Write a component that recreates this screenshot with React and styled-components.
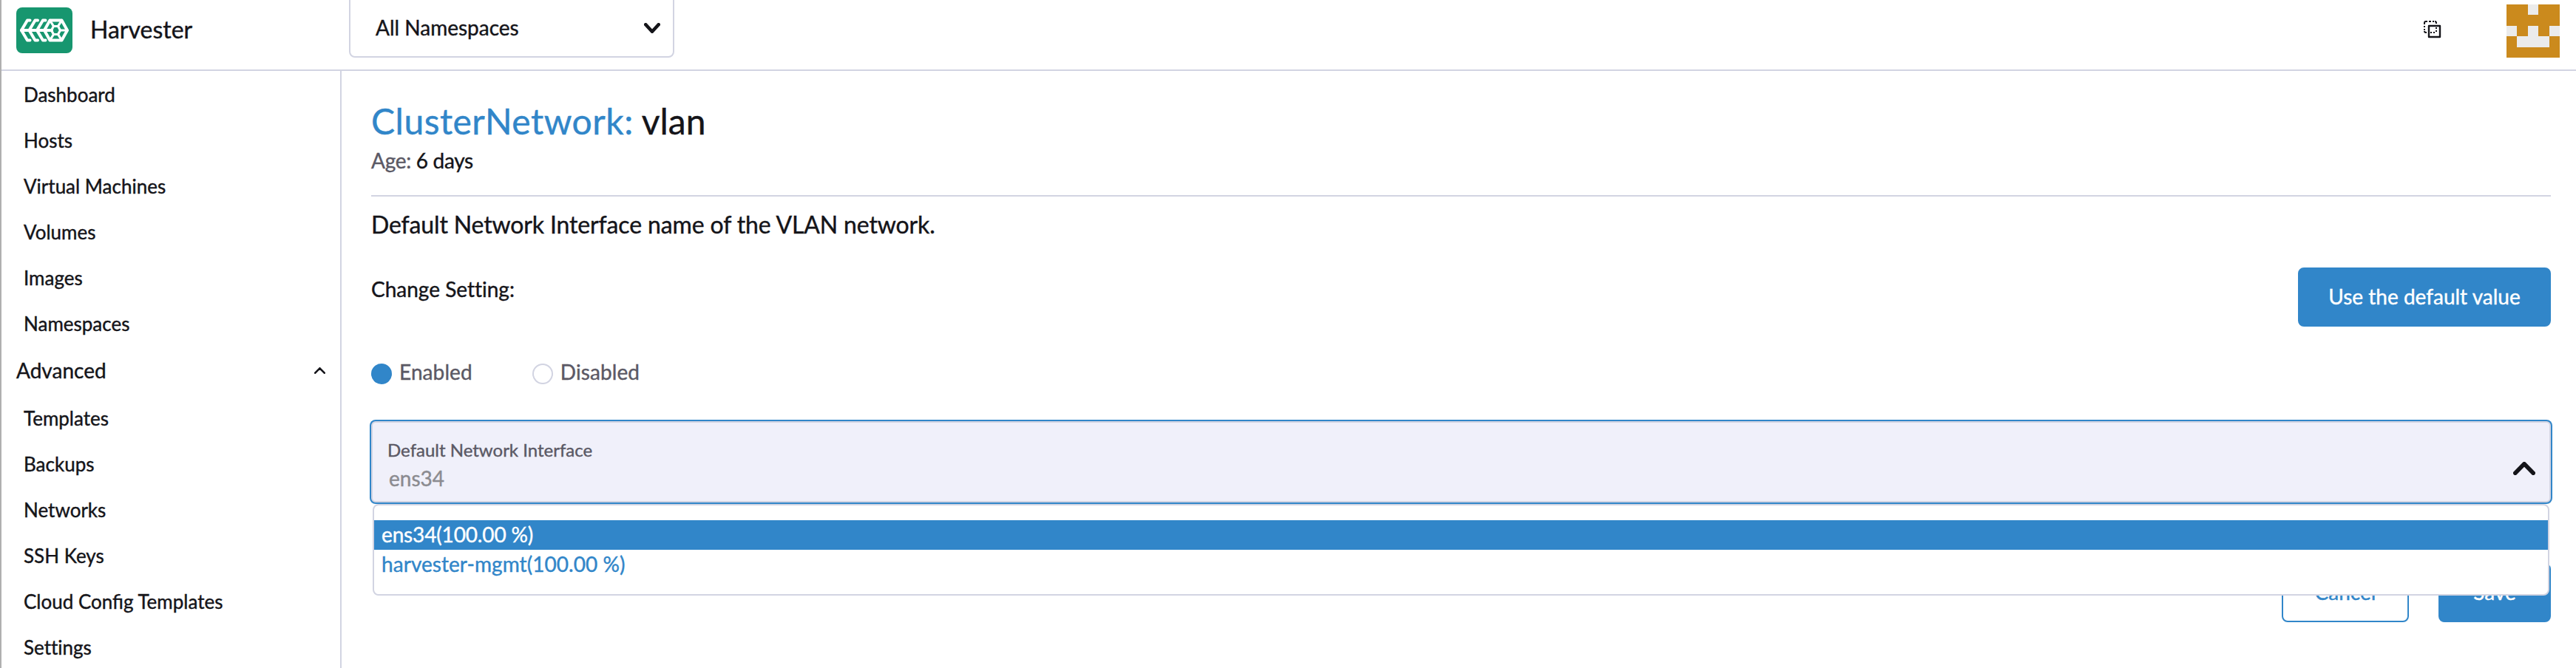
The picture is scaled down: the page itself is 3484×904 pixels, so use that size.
import React from "react";
import styled, { createGlobalStyle } from "styled-components";

const c = {
  primary: "#3186c9",
  text: "#141419",
  muted: "#5b5965",
  border: "#d2d4e2",
  placeholder: "#8b8b90",
  inputBg: "#f0f0fa",
};

const Global = createGlobalStyle`
  *, *::before, *::after { box-sizing: border-box; }
  body {
    margin: 0;
    background: #fff;
    color: ${c.text};
    font-family: Lato, "Liberation Sans", sans-serif;
    font-size: 28px;
    line-height: 40px;
    -webkit-text-stroke: 0.4px currentColor;
  }
  h1, p { margin: 0; font-weight: 400; }
`;

const Page = styled.div`
  display: flex;
  flex-direction: column;
  height: 904px;
  overflow: hidden;
  border-left: 2px solid #b0b0b0;
`;

const Header = styled.header`
  display: flex;
  flex: none;
  height: 96px;
  border-bottom: 2px solid ${c.border};
`;

const Brand = styled.div`
  display: flex;
  align-items: flex-start;
  width: 470px;
  padding: 10px 0 0 20px;
`;

const BrandName = styled.span`
  margin: 10px 0 0 24px;
  font-size: 32px;
`;

const NamespacePicker = styled.div`
  display: flex;
  align-items: flex-start;
  justify-content: space-between;
  width: 440px;
  height: 88px;
  margin-top: -10px;
  padding: 25px 17px 0 34px;
  border: 2px solid ${c.border};
  border-radius: 8px;

  svg { margin-top: 14px; }
`;

const HeaderTools = styled.div`
  display: flex;
  align-items: flex-start;
  margin-left: auto;
  padding: 6px 22px 0 0;
  gap: 88px;

  svg:first-child { margin-top: 22px; }
`;

const Body = styled.div`
  display: flex;
  flex: 1;
  min-height: 0;
`;

const Sidebar = styled.nav`
  flex: none;
  width: 460px;
  border-right: 2px solid ${c.border};
  overflow: hidden;
`;

const NavItem = styled.div`
  height: 62px;
  padding-left: 30px;
  font-size: 26px;
  line-height: 64px;
  font-variant-ligatures: ${(p) => (p.$plain ? "none" : "normal")};
`;

const NavGroup = styled.div`
  display: flex;
  align-items: center;
  justify-content: space-between;
  height: 66px;
  padding: 0 20px 0 20px;
`;

const Main = styled.main`
  flex: 1;
  padding: 40px 34px 0 40px;
`;

const Title = styled.h1`
  font-size: 48px;
  line-height: 56px;

  span {
    color: ${c.primary};
    letter-spacing: 0.5px;
  }
`;

const Meta = styled.p`
  margin-top: 5px;
  padding-bottom: 27px;
  border-bottom: 2px solid ${c.border};
  letter-spacing: -0.3px;

  span { color: ${c.muted}; }
`;

const Description = styled.p`
  margin-top: 18px;
  font-size: 32px;
  letter-spacing: -0.14px;
`;

const SettingRow = styled.div`
  display: flex;
  align-items: flex-start;
  justify-content: space-between;
  margin-top: 38px;

  p {
    margin-top: 9px;
    font-variant-ligatures: none;
  }
`;

const Button = styled.button`
  display: block;
  width: ${(p) => p.$width}px;
  height: 80px;
  padding: 0 0 2px;
  border: 2px solid ${c.primary};
  border-radius: 8px;
  background: ${(p) => (p.$outline ? "#fff" : c.primary)};
  color: ${(p) => (p.$outline ? c.primary : "#fff")};
  font: inherit;
`;

const RadioGroup = styled.div`
  display: flex;
  gap: 81px;
  margin-top: 42px;
  line-height: 38px;
`;

const Radio = styled.label`
  display: flex;
  gap: 10px;
  color: ${c.muted};
  letter-spacing: 0.1px;

  &::before {
    content: "";
    width: 28px;
    height: 28px;
    margin-top: 8px;
    border: 2px solid ${(p) => (p.$checked ? c.primary : c.border)};
    border-radius: 50%;
    background: ${(p) => (p.$checked ? c.primary : "#fff")};
  }
`;

const Select = styled.div`
  position: relative;
  display: flex;
  justify-content: space-between;
  height: 110px;
  margin-top: 48px;
  padding: 18px 19px 0 20px;
  border: 2px solid ${c.border};
  border-radius: 6px;
  background: ${c.inputBg};
  box-shadow: 0 0 0 2px ${c.primary};

  > svg { margin-top: 35px; }
`;

const SelectLabel = styled.div`
  height: 37px;
  color: ${c.muted};
  font-size: 24px;
  line-height: 38px;
`;

const SelectValue = styled.div`
  padding-left: 2px;
  color: ${c.placeholder};
`;

const Menu = styled.div`
  position: absolute;
  top: 110px;
  left: 0;
  right: 0;
  height: 124px;
  padding-top: 20px;
  border: 2px solid ${c.border};
  border-radius: 8px;
  background: #fff;
`;

const Option = styled.div`
  height: 40px;
  padding-left: 10px;
  background: ${(p) => (p.$active ? c.primary : "#fff")};
  color: ${(p) => (p.$active ? "#fff" : c.primary)};
  letter-spacing: ${(p) => (p.$active ? "-0.15px" : "0.05px")};
  line-height: 38px;
`;

const Footer = styled.div`
  display: flex;
  justify-content: flex-end;
  gap: 40px;
  margin-top: 82px;
`;

const Chevron = ({ w, h, stroke, up }) => {
  const o = stroke / 2;
  const pts = up
    ? `${o},${h - o} ${w / 2},${o} ${w - o},${h - o}`
    : `${o},${o} ${w / 2},${h - o} ${w - o},${o}`;
  return (
    <svg width={w} height={h} fill="none" stroke={c.text} strokeWidth={stroke} strokeLinecap="round" strokeLinejoin="round">
      <polyline points={pts} />
    </svg>
  );
};

const Logo = () => (
  <svg width="76" height="62" viewBox="0 0 76 62">
    <rect width="76" height="62" rx="8" fill="#17966f" />
    <g fill="none" stroke="#fff" strokeWidth="4" strokeLinecap="round" strokeLinejoin="round">
      <path d="M7 31H48" />
      <path d="M18.500 17.500H15L7 31L15 44.500H18.500" />
      <path d="M29 17.500H25.500L17.500 31L25.500 44.500H29" />
      <path d="M39.500 17.500H36L28 31L36 44.500H39.500" />
      <path d="M45.500 17.500H61.500L69 31L61.500 44.500H45.500L38 31Z" />
      <path d="M50.500 25.500H56.500L59.500 31L56.500 36.500H50.500L47.500 31Z" strokeWidth="3.2" />
      <path d="M45.500 17.500L50.500 25.500M61.500 17.500L56.500 25.500M45.500 44.500L50.500 36.500M61.500 44.500L56.500 36.500M59.500 31H69" strokeWidth="3.2" />
    </g>
  </svg>
);

const CloneIcon = () => (
  <svg width="24" height="24" fill="none" stroke={c.text}>
    <path d="M1 5V3Q1 1 3 1H5M7 1H10M12 1H14M15 1Q17 1 17 3V4M1 7V9M1 11V13M1 14Q1 16 3 16H4M17 9V11M17 13V15M9 16H11M13 16H15" strokeWidth="2" />
    <path d="M7 7H22V22H7Z" strokeWidth="2.400" strokeLinejoin="round" />
  </svg>
);

const AVATAR = ["11011", "11111", "01010", "10001", "11111"];

const Avatar = () => (
  <svg width="72" height="72" viewBox="0 0 5 5" shapeRendering="crispEdges">
    <rect width="5" height="5" fill="#cb8a1d" />
    {AVATAR.flatMap((row, y) =>
      [...row].map((v, x) => v === "0" && <rect key={`${x}-${y}`} x={x} y={y} width="1" height="1" fill="#ebebeb" />)
    )}
  </svg>
);

const MAIN_NAV = ["Dashboard", "Hosts", "Virtual Machines", "Volumes", "Images", "Namespaces"];
const ADVANCED_NAV = ["Templates", "Backups", "Networks", "SSH Keys", "Cloud Config Templates", "Settings"];

export default function App() {
  return (
    <>
      <Global />
      <Page>
        <Header>
          <Brand>
            <Logo />
            <BrandName>Harvester</BrandName>
          </Brand>
          <NamespacePicker>
            All Namespaces
            <Chevron w={22} h={14} stroke={4.6} />
          </NamespacePicker>
          <HeaderTools>
            <CloneIcon />
            <Avatar />
          </HeaderTools>
        </Header>
        <Body>
          <Sidebar>
            {MAIN_NAV.map((n) => <NavItem key={n}>{n}</NavItem>)}
            <NavGroup>
              Advanced
              <Chevron w={15} h={9} stroke={2.6} up />
            </NavGroup>
            {ADVANCED_NAV.map((n) => <NavItem key={n} $plain={n === "Settings"}>{n}</NavItem>)}
          </Sidebar>
          <Main>
            <Title><span>ClusterNetwork:</span> vlan</Title>
            <Meta><span>Age:</span> 6 days</Meta>
            <Description>Default Network Interface name of the VLAN network.</Description>
            <SettingRow>
              <p>Change Setting:</p>
              <Button $width={342}>Use the default value</Button>
            </SettingRow>
            <RadioGroup>
              <Radio $checked>Enabled</Radio>
              <Radio>Disabled</Radio>
            </RadioGroup>
            <Select>
              <div>
                <SelectLabel>Default Network Interface</SelectLabel>
                <SelectValue>ens34</SelectValue>
              </div>
              <Chevron w={30} h={18} stroke={5.6} up />
              <Menu>
                <Option $active>ens34(100.00 %)</Option>
                <Option>harvester-mgmt(100.00 %)</Option>
              </Menu>
            </Select>
            <Footer>
              <Button $width={172} $outline>Cancel</Button>
              <Button $width={152}>Save</Button>
            </Footer>
          </Main>
        </Body>
      </Page>
    </>
  );
}
